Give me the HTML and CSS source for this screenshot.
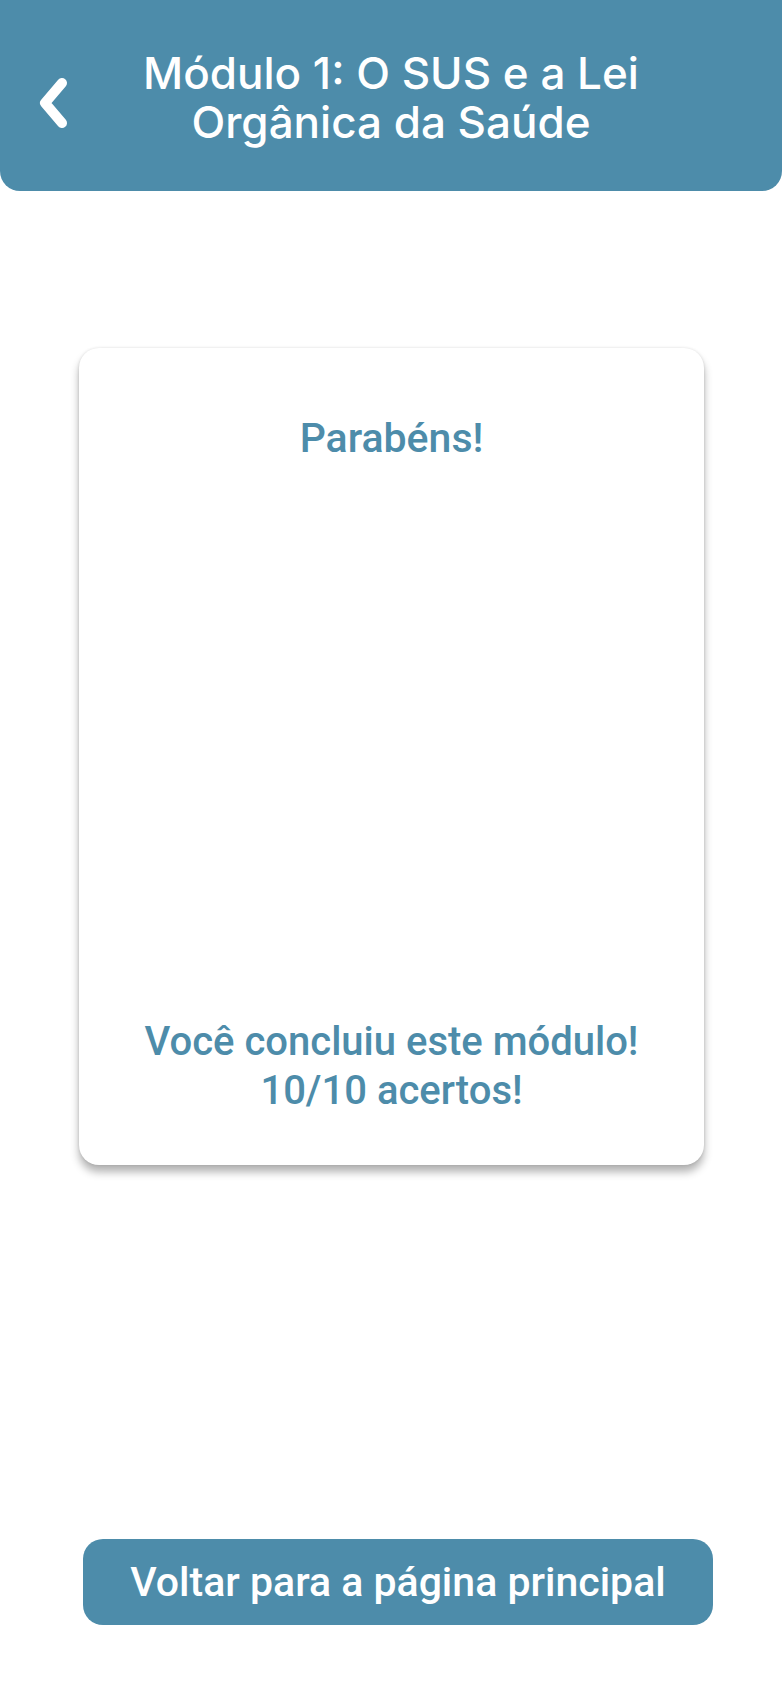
FILE: index.html
```html
<!DOCTYPE html>
<html lang="pt">
<head>
<meta charset="utf-8">
<link rel="stylesheet" href="styles.css">
</head>
<body>
<header class="topbar">
  <button class="back" aria-label="Voltar">
    <svg width="34" height="52" viewBox="0 0 34 52"><path d="M26 6 L9 26 L26 46" fill="none" stroke="#fff" stroke-width="10" stroke-linecap="round" stroke-linejoin="round"/></svg>
  </button>
  <h1 class="title">Módulo 1: O SUS e a Lei<br>Orgânica da Saúde</h1>
</header>
<main class="content">
  <section class="card">
    <h2 class="card-title">Parabéns!</h2>
    <div class="card-media"></div>
    <p class="card-result">Você concluiu este módulo!<br>10/10 acertos!</p>
  </section>
  <div class="actions">
    <button class="primary">Voltar para a página principal</button>
  </div>
</main>
</body>
</html>
```
FILE: styles.css
```css
* { box-sizing: border-box; }
html, body { margin: 0; padding: 0; background: #fff; }
body { width: 782px; height: 1692px; overflow: hidden; }

.topbar {
  height: 191px;
  background: #4d8caa;
  border-radius: 0 0 20px 20px;
  display: flex;
  align-items: center;
  justify-content: center;
  position: relative;
}
.back {
  position: absolute;
  left: 36px;
  top: 77px;
  width: 34px;
  height: 52px;
  padding: 0;
  border: 0;
  background: none;
  display: flex;
}
.title {
  margin: 0;
  margin-top: 4px;
  color: #fff;
  font-family: Inter, "Open Sans", sans-serif;
  font-weight: 500;
  font-size: 44px;
  line-height: 49px;
  text-align: center;
}

.content {
  display: flex;
  flex-direction: column;
}
.card {
  margin: 157px 0 0 79px;
  width: 625px;
  height: 817px;
  background: #fff;
  border-radius: 20px;
  box-shadow: 0 7px 9px rgba(0,0,0,0.3), 0 0 3px rgba(0,0,0,0.12);
  display: flex;
  flex-direction: column;
  align-items: center;
  color: #4d8caa;
  font-family: Roboto, "Noto Sans", sans-serif;
  font-weight: 500;
}
.card-title {
  margin: 66px 0 0;
  font-size: 41px;
  line-height: 48px;
  font-weight: 500;
}
.card-media { flex: 1; }
.card-result {
  margin: 0 0 50px;
  font-size: 40px;
  line-height: 49px;
  text-align: center;
}
.actions {
  margin: 374px 0 0 83px;
}
.primary {
  width: 630px;
  height: 86px;
  border: 0;
  border-radius: 20px;
  background: #4d8caa;
  color: #fff;
  font-family: Roboto, "Noto Sans", sans-serif;
  font-weight: 500;
  font-size: 41px;
  padding: 0;
}
```
